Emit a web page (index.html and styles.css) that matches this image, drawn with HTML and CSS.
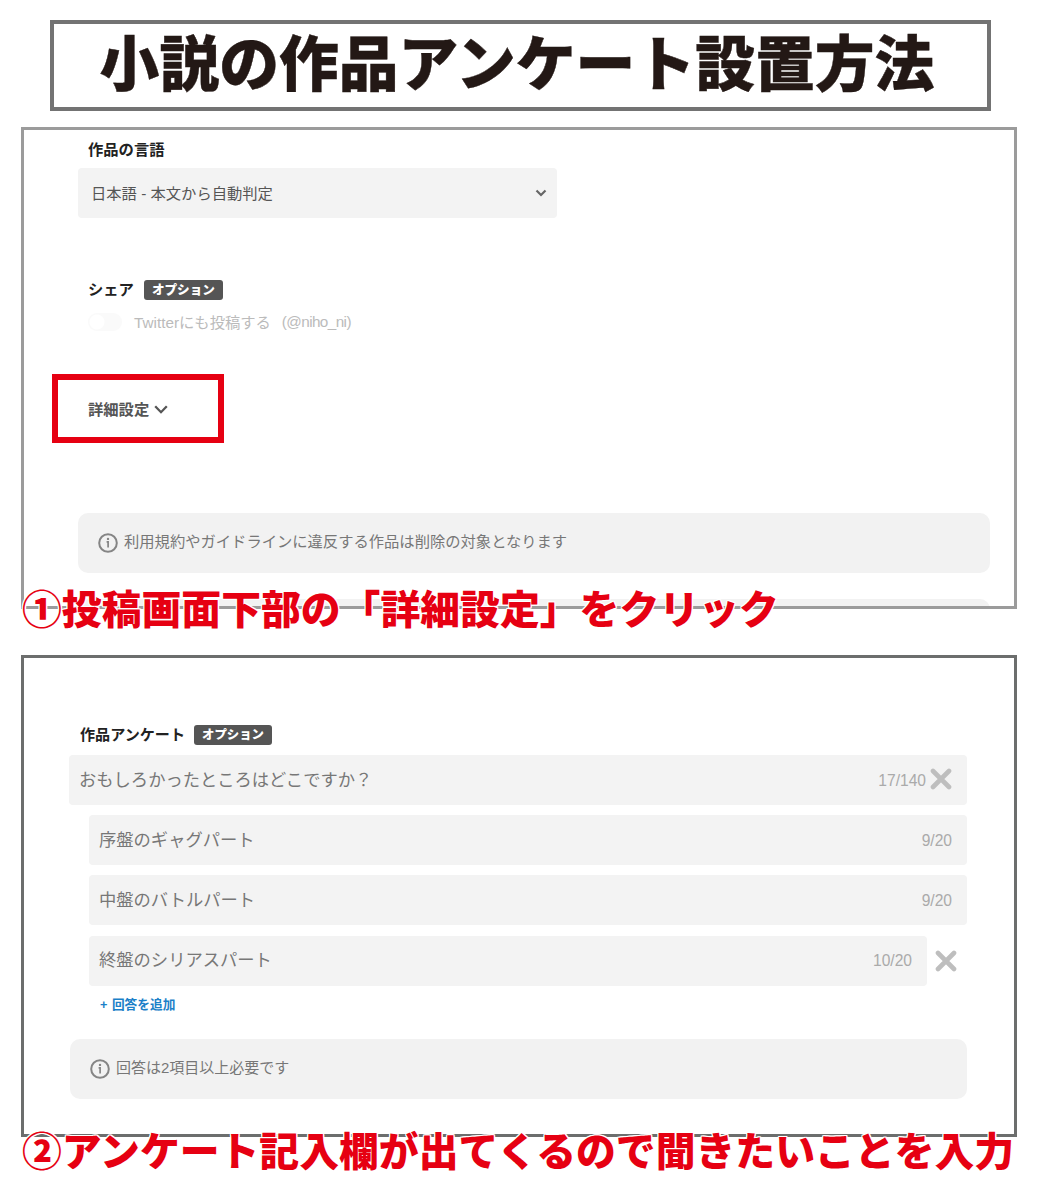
FILE: index.html
```
<!DOCTYPE html>
<html lang="ja">
<head>
    <meta charset="UTF-8">
    <meta name="viewport" content="width=device-width, initial-scale=1.0">
    <title>小説の作品アンケート設置方法</title>
    <link rel="stylesheet" href="styles.css">
</head>
<body>
    <h1 class="title">小説の作品アンケート設置方法</h1>

    <!-- Step 1 -->
    <section class="panel panel-post">
        <div class="label"><span>作品の言語</span></div>
        <div class="select">
            <span>日本語 - 本文から自動判定</span>
            <svg width="12" height="8" viewBox="0 0 12 8"><path d="M1.5 1.5 L6 6 L10.5 1.5" fill="none" stroke="#666" stroke-width="2.2"/></svg>
        </div>
        <div class="label share-label"><span>シェア</span><b class="badge">オプション</b></div>
        <div class="share">
            <span class="toggle"></span>
            <span class="share-text">Twitterにも投稿する</span>
            <span class="account">(@niho_ni)</span>
        </div>
        <div class="detail">
            <span>詳細設定</span>
            <svg width="14" height="9" viewBox="0 0 14 9"><path d="M1.2 1.3 L7 7.2 L12.8 1.3" fill="none" stroke="#555" stroke-width="2.3"/></svg>
        </div>
        <div class="notice">
            <svg width="20" height="20" viewBox="0 0 20 20"><circle cx="10" cy="10" r="8.8" fill="none" stroke="#858585" stroke-width="2"/><circle cx="10" cy="5.9" r="1.2" fill="#858585"/><path d="M8.6 8.9 H10.1 V14.6" fill="none" stroke="#858585" stroke-width="1.7"/></svg>
            <span>利用規約やガイドラインに違反する作品は削除の対象となります</span>
        </div>
        <div class="notice next"></div>
    </section>
    <p class="caption"><span class="num">①</span>投稿画面下部の「詳細設定」をクリック</p>

    <!-- Step 2 -->
    <section class="panel panel-survey">
        <div class="label"><span>作品アンケート</span><b class="badge">オプション</b></div>
        <div class="field question">
            <span>おもしろかったところはどこですか？</span>
            <span class="count">17/140</span>
            <svg width="22" height="22" viewBox="0 0 22 22"><path d="M3 3 L19 19 M19 3 L3 19" stroke="#bebebe" stroke-width="4.6" stroke-linecap="round"/></svg>
        </div>
        <div class="answers">
            <div class="field"><span>序盤のギャグパート</span><span class="count">9/20</span></div>
            <div class="field"><span>中盤のバトルパート</span><span class="count">9/20</span></div>
            <div class="row">
                <div class="field"><span>終盤のシリアスパート</span><span class="count">10/20</span></div>
                <svg width="22" height="22" viewBox="0 0 22 22"><path d="M3 3 L19 19 M19 3 L3 19" stroke="#bebebe" stroke-width="4.6" stroke-linecap="round"/></svg>
            </div>
            <div class="add">+ 回答を追加</div>
        </div>
        <div class="notice">
            <svg width="20" height="20" viewBox="0 0 20 20"><circle cx="10" cy="10" r="8.8" fill="none" stroke="#858585" stroke-width="2"/><circle cx="10" cy="5.9" r="1.2" fill="#858585"/><path d="M8.6 8.9 H10.1 V14.6" fill="none" stroke="#858585" stroke-width="1.7"/></svg>
            <span>回答は2項目以上必要です</span>
        </div>
    </section>
    <p class="caption caption-survey"><span class="num">②</span>アンケート記入欄が出てくるので聞きたいことを入力</p>
</body>
</html>
```

FILE: styles.css
```
* {
    box-sizing: border-box;
}
body {
    margin: 0;
    padding: 20px 29px 0 21px;
    height: 1200px;
    overflow: hidden;
    background-color: #fff;
    font-family: "Liberation Sans", "Noto Sans CJK JP", sans-serif;
    font-size: 15.3px;
    color: #555;
}
svg {
    display: block;
    flex: none;
}
.title {
    margin: 0 26px 16px 29px;
    padding-right: 7px;
    height: 91px;
    border: 4px solid #737373;
    font-family: "Noto Sans CJK JP", sans-serif;
    font-size: 59.8px;
    font-weight: 900;
    line-height: 72px;
    text-align: center;
    white-space: nowrap;
    color: #231815;
    -webkit-text-stroke: 0.4px #231815;
}
.panel {
    height: 482px;
    border: 3px solid #9b9b9b;
    overflow: hidden;
}
.panel-post {
    padding: 10px 24px 0 54px;
}
.label {
    display: flex;
    align-items: center;
    gap: 10px;
    height: 20px;
    margin-left: 10px;
    font-weight: bold;
    color: #222;
}
.label span {
    margin-top: -4px;
}
.badge {
    height: 20px;
    padding: 0 8px;
    border-radius: 3px;
    background-color: #555;
    color: #fff;
    font-size: 12.6px;
    line-height: 20px;
}
.select {
    display: flex;
    align-items: center;
    justify-content: space-between;
    width: 479px;
    height: 50px;
    margin-top: 8px;
    padding: 0 10px 0 13px;
    border-radius: 4px;
    background-color: #f3f3f3;
}
.select span {
    margin-top: -3px;
}
.share-label {
    margin-top: 62px;
}
.share {
    display: flex;
    align-items: center;
    height: 20px;
    margin: 12px 0 0 10px;
    color: #bbb;
}
.toggle {
    width: 34px;
    height: 18px;
    margin-right: 12px;
    border-radius: 9px;
    background: radial-gradient(circle at 9px 9px, #fff 7px, transparent 8px) #fafafa;
}
.share-text {
    margin-top: -3px;
}
.account {
    margin-left: 11px;
    letter-spacing: -0.6px;
}
.detail {
    display: flex;
    align-items: center;
    gap: 5px;
    width: 172px;
    height: 69px;
    margin: 42px 0 0 -26px;
    padding-left: 30px;
    border: 6px solid #e60012;
    font-weight: bold;
}
.detail span {
    margin-top: -2px;
}
.detail svg {
    margin-top: 2px;
}
.notice {
    display: flex;
    align-items: center;
    gap: 6px;
    height: 60px;
    padding-left: 20px;
    border-radius: 10px;
    background-color: #f2f2f2;
    color: #777;
}
.notice span {
    margin-top: -7px;
}
.panel-post .notice {
    margin-top: 70px;
}
.panel-post .next {
    margin-top: 26px;
}
.caption {
    position: relative;
    height: 58px;
    margin: -31px 0 19px 1px;
    font-family: "Noto Sans CJK JP", sans-serif;
    font-size: 39.85px;
    font-weight: 900;
    line-height: 58px;
    white-space: nowrap;
    color: #e60012;
    text-shadow: 1px 0 #fff, -1px 0 #fff, 0 1px #fff, 0 -1px #fff, 1px 1px #fff, -1px -1px #fff, 1px -1px #fff, -1px 1px #fff;
}
.caption-survey {
    margin-top: -17px;
}
.panel-survey {
    border-color: #6c6e6d;
    padding: 67px 47px 0 45px;
}
.panel-survey .label {
    gap: 9px;
    margin-left: 11px;
    font-size: 15.1px;
}
.panel-survey .badge {
    font-size: 12.4px;
}
.field {
    display: flex;
    align-items: center;
    flex: 1;
    height: 50px;
    padding: 0 15px 0 10px;
    border-radius: 4px;
    background-color: #f3f3f3;
    font-size: 17.3px;
    color: #777;
}
.field span {
    margin-top: -4px;
}
.field .count {
    margin: 1px 0 0 auto;
    font-size: 15.6px;
    color: #aaa;
}
.question {
    margin-top: 10px;
}
.question svg {
    margin: -3px 0 0 4px;
}
.answers {
    display: grid;
    gap: 10.4px;
    margin: 10px 0 0 20px;
}
.row {
    display: flex;
    align-items: center;
    gap: 8px;
    margin-right: 10px;
}
.add {
    height: 20px;
    margin-left: 11px;
    margin-top: -1px;
    font-size: 12.7px;
    font-weight: bold;
    line-height: 20px;
    word-spacing: 1px;
    color: #1b80c8;
}
.panel-survey .notice {
    margin: 24px 0 0 1px;
}
.panel-survey .notice span {
    margin-top: -5px;
    font-size: 15px;
}
```
